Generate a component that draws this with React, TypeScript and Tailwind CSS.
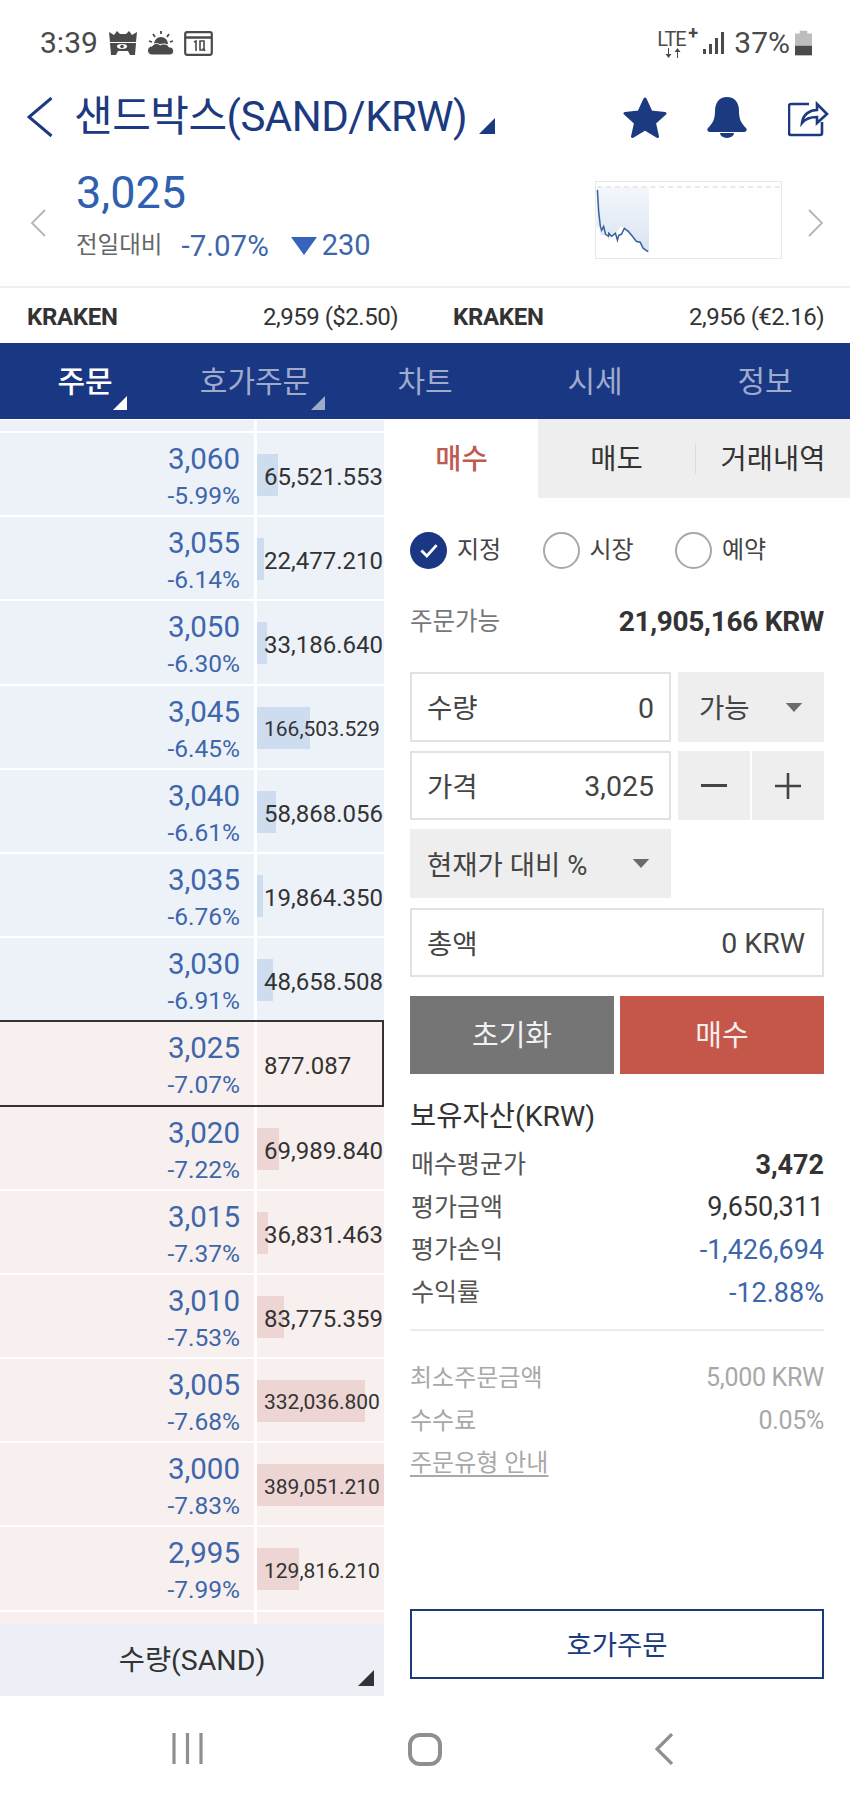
const ASKS = [
  { price: "3,060", pct: "-5.99%", vol: "65,521.553", bar: 21 },
  { price: "3,055", pct: "-6.14%", vol: "22,477.210", bar: 7 },
  { price: "3,050", pct: "-6.30%", vol: "33,186.640", bar: 10 },
  { price: "3,045", pct: "-6.45%", vol: "166,503.529", bar: 53, small: true },
  { price: "3,040", pct: "-6.61%", vol: "58,868.056", bar: 19 },
  { price: "3,035", pct: "-6.76%", vol: "19,864.350", bar: 6 },
  { price: "3,030", pct: "-6.91%", vol: "48,658.508", bar: 16 },
];

const BIDS = [
  { price: "3,025", pct: "-7.07%", vol: "877.087", bar: 0, current: true },
  { price: "3,020", pct: "-7.22%", vol: "69,989.840", bar: 22 },
  { price: "3,015", pct: "-7.37%", vol: "36,831.463", bar: 11 },
  { price: "3,010", pct: "-7.53%", vol: "83,775.359", bar: 27 },
  { price: "3,005", pct: "-7.68%", vol: "332,036.800", bar: 108, small: true },
  { price: "3,000", pct: "-7.83%", vol: "389,051.210", bar: 127, small: true },
  { price: "2,995", pct: "-7.99%", vol: "129,816.210", bar: 42, small: true },
];

type Level = {
  price: string;
  pct: string;
  vol: string;
  bar: number;
  small?: boolean;
  current?: boolean;
};

function Corner({ className }: { className: string }) {
  return (
    <svg viewBox="0 0 16 16" className={className} fill="currentColor">
      <polygon points="16,0 16,16 0,16" />
    </svg>
  );
}

function Caret() {
  return (
    <svg viewBox="0 0 20 12" className="h-[11px] w-[20px] text-[#6b6b6b]" fill="currentColor">
      <path d="M1 1h18L10 11z" />
    </svg>
  );
}

function Row({ level, side }: { level: Level; side: "ask" | "bid" }) {
  const bg = side === "ask" ? "bg-[#edf2f9]" : "bg-[#f8f0ee]";
  const barBg = side === "ask" ? "bg-[#cedcef]" : "bg-[#ecd5d3]";
  return (
    <div className="relative mb-[2px] flex h-[82.2px] shrink-0">
      <div className={`flex w-[254px] flex-col items-end pr-[14px] pt-[8px] text-[#3d66ab] ${bg}`}>
        <span className="text-[29.5px] leading-[36px]">{level.price}</span>
        <span className="mt-px text-[24.5px] leading-[36px]">{level.pct}</span>
      </div>
      <div className={`relative ml-[3px] flex w-[127px] items-center pl-[7px] pt-[6px] text-[#333] ${bg}`}>
        {level.bar > 0 && (
          <div
            className={`absolute left-0 top-[21px] h-[42px] ${barBg}`}
            style={{ width: level.bar }}
          />
        )}
        <span className={`relative ${level.small ? "text-[21px]" : "text-[24px]"}`}>{level.vol}</span>
      </div>
      {level.current && (
        <div className="absolute inset-x-0 -inset-y-[2px] border-y-2 border-r-2 border-[#333]" />
      )}
    </div>
  );
}

function RadioItem({ label, checked }: { label: string; checked?: boolean }) {
  return (
    <div className="flex w-[132.5px] items-center gap-[10px]">
      {checked ? (
        <span className="flex h-[37px] w-[37px] items-center justify-center rounded-full bg-[#1a3784]">
          <svg viewBox="0 0 24 24" className="h-[26px] w-[26px]" fill="none" stroke="white" strokeWidth="2.6">
            <path d="M5 12.5l5 5 9-10" />
          </svg>
        </span>
      ) : (
        <span className="h-[37px] w-[37px] rounded-full border-2 border-[#a8a8a8]" />
      )}
      <span className="text-[24px] text-[#444]">{label}</span>
    </div>
  );
}

function InfoRow({ label, value, className }: { label: string; value: string; className: string }) {
  return (
    <div className="flex h-[42.7px] items-center justify-between pt-[3px]">
      <span className="pl-[1px] text-[25px] text-[#555]">{label}</span>
      <span className={className}>{value}</span>
    </div>
  );
}

function StatusBar() {
  return (
    <div className="flex h-[75px] items-start justify-between pl-[40px] pr-[38px] pt-[28px] text-[#4a4a4a]">
      <div className="flex items-center">
        <span className="text-[30px] leading-[30px]">3:39</span>
        <svg viewBox="0 0 28 24" className="ml-[11px] h-[24px] w-[28px]" fill="currentColor">
          <path d="M0 1l5 3 3-4 3 3h6l3-3 3 4 5-3-1 10H1z" />
          <path d="M1 12h26l-1 12h-5l-2-4H9l-2 4H2z" />
          <ellipse cx="13" cy="15.5" rx="5" ry="2.4" fill="white" />
          <circle cx="13" cy="15.5" r="1.8" />
        </svg>
        <svg viewBox="0 0 26 24" className="ml-[11px] h-[24px] w-[26px]" fill="currentColor">
          <path d="M13 0v3M5 3l2 3M21 3l-2 3M1 10l3 1M25 10l-3 1" stroke="currentColor" strokeWidth="1.8" />
          <path d="M6 13a7 7 0 0 1 14 0z" />
          <path d="M4 24a4.500 4.500 0 0 1 0-9c3-3.500 6-3 8-1 3-2 8-1 9 2a4 4 0 0 1 1 8z" stroke="white" strokeWidth="1" />
        </svg>
        <svg viewBox="0 0 29 25" className="ml-[10px] h-[25px] w-[29px]" fill="none" stroke="currentColor">
          <rect x="1.200" y="1.200" width="26.600" height="22.600" rx="2" strokeWidth="2.200" />
          <path d="M1 6.500h27" strokeWidth="2.500" />
          <path d="M10 11l2-1v10M16 10h4v9h-4zM19 17l2 3" strokeWidth="1.600" />
        </svg>
      </div>
      <div className="flex items-center">
        <div className="relative h-[28px] w-[42px] text-[#4a4a4a]">
          <span className="absolute left-0 top-0 text-[20px] leading-[20px] tracking-[-1px]">LTE</span>
          <span className="absolute left-[31px] top-[-5px] text-[18px] font-bold leading-[18px]">+</span>
          <svg viewBox="0 0 16 10" className="absolute left-[8px] top-[19px] h-[10px] w-[16px]" fill="currentColor">
            <path d="M4 0v6h2.500L3.500 10 .5 6H3V0zM12 10V4H9.500L12.500 0l3 4H13v6z" />
          </svg>
        </div>
        <svg viewBox="0 0 22 22" className="ml-[4px] h-[22px] w-[22px]" fill="currentColor">
          <rect x="0" y="17" width="3" height="5" />
          <rect x="6" y="12" width="3" height="10" />
          <rect x="12" y="6" width="3" height="16" />
          <rect x="18" y="0" width="3" height="22" />
        </svg>
        <span className="ml-[9px] text-[30px] leading-[30px]">37%</span>
        <svg viewBox="0 0 18 26" className="ml-[5px] h-[26px] w-[17px]">
          <path d="M5 0h8v3h5v23H0V3h5z" fill="#bdbdbd" />
          <rect x="0" y="16" width="18" height="10" fill="#4a4a4a" />
        </svg>
      </div>
    </div>
  );
}

function Header() {
  return (
    <div className="flex h-[84px] items-center text-[#1c3a80]">
      <svg viewBox="0 0 26 40" className="ml-[27px] h-[40px] w-[26px]" fill="none" stroke="currentColor" strokeWidth="3">
        <path d="M24.500 1L2 20l22.500 19" />
      </svg>
      <span className="ml-[21px] text-[42px] leading-none tracking-[-0.5px]">샌드박스(SAND/KRW)</span>
      <Corner className="ml-[12px] mt-[17px] h-[16px] w-[16px]" />
      <div className="ml-auto flex items-center">
        <svg viewBox="0 0 46 42" className="h-[42px] w-[46px]" fill="currentColor" stroke="currentColor" strokeWidth="3" strokeLinejoin="round">
          <path d="M23 3l6 13 14 1.500-10.500 9.500 3 13.500L23 33l-12.500 7.500 3-13.500L3 17.500 17 16z" />
        </svg>
        <svg viewBox="0 0 40 42" className="ml-[39px] h-[42px] w-[40px]" fill="currentColor">
          <path d="M20 1c8 0 12 6 12 14 0 8 2 12 7 17 1.500 2 .5 4-2 4H3c-2.500 0-3.500-2-2-4 5-5 7-9 7-17C8 7 12 1 20 1z" />
          <path d="M13 37h14a7 5 0 0 1-14 0z" />
        </svg>
        <svg viewBox="0 0 41 39" className="ml-[41px] mr-[21px] h-[39px] w-[41px]" fill="none" stroke="currentColor" strokeWidth="2.600">
          <path d="M21 6H3a2 2 0 0 0-2 2v27a2 2 0 0 0 2 2h29a2 2 0 0 0 2-2V24" />
          <path d="M14 25c1-9 8-13 15-13V6l10 10-10 9v-6c-6 0-11 1-15 6z" />
        </svg>
      </div>
    </div>
  );
}

function PriceBlock() {
  return (
    <div className="flex h-[129px] items-center border-b-2 border-[#eeeeee]">
      <svg viewBox="0 0 16 28" className="ml-[30px] h-[28px] w-[16px]" fill="none" stroke="#b5b5b5" strokeWidth="1.800">
        <path d="M15 1L2 14l13 13" />
      </svg>
      <div className="mb-[14px] ml-[30px] flex flex-col">
        <span className="text-[45px] leading-[52px] text-[#2f5fb0]">3,025</span>
        <div className="mt-[9px] flex h-[36px] items-center text-[#3d66ab]">
          <span className="text-[23.5px] text-[#666]">전일대비</span>
          <span className="ml-[19px] text-[29.5px]">-7.07%</span>
          <svg viewBox="0 0 26 18" className="ml-[22px] h-[18px] w-[26px] text-[#3464bd]" fill="currentColor">
            <path d="M0 0h26L13 18z" />
          </svg>
          <span className="ml-[5px] text-[29px]">230</span>
        </div>
      </div>
      <div className="relative mb-[5px] ml-auto h-[78px] w-[187px] border border-[#e8e8e8]">
        <svg viewBox="0 0 186 77" className="h-full w-full">
          <defs>
            <linearGradient id="spark" x1="0" y1="0" x2="0" y2="1">
              <stop offset="0" stopColor="#f4f7fb" />
              <stop offset="1" stopColor="#d8e3f1" />
            </linearGradient>
          </defs>
          <path d="M1 5H53V72L47 66 43 61 40 59 37 56 34 54 31 51 28 47 24 45 21 50 18 53 15 53 13 52 12 60 10 53 8 54 4 54 3 51 3 44 1 47 0 44V5z" fill="url(#spark)" />
          <path d="M0.500 5H186" stroke="#e4e4e4" strokeWidth="1.500" strokeDasharray="5 4" />
          <path
            d="M0.700 8L2 30 3.700 45 5 49 7 45 9 53 12 55 12.300 52 15 55 19 52 21 59 22.300 54 25 53 28 47 32 50 37 56 40 60 44 61 47 67 52 70.500"
            fill="none"
            stroke="#36609f"
            strokeWidth="1.500"
          />
        </svg>
      </div>
      <svg viewBox="0 0 16 28" className="ml-[26px] mr-[26px] h-[28px] w-[16px]" fill="none" stroke="#b5b5b5" strokeWidth="1.800">
        <path d="M1 1l13 13L1 27" />
      </svg>
    </div>
  );
}

function KrakenRow() {
  return (
    <div className="flex h-[55px] items-center pl-[27px] pr-[26px] pt-[3px] text-[24px] text-[#333]">
      <div className="flex w-[371px] justify-between">
        <span className="font-bold tracking-[-0.3px]">KRAKEN</span>
        <span className="tracking-[-0.5px]">2,959 ($2.50)</span>
      </div>
      <div className="ml-[55px] flex flex-1 justify-between">
        <span className="font-bold tracking-[-0.3px]">KRAKEN</span>
        <span className="tracking-[-0.5px]">2,956 (€2.16)</span>
      </div>
    </div>
  );
}

function NavTabs() {
  return (
    <div className="grid h-[76px] grid-cols-5 bg-[#1a3784] text-[30px] text-[#9fabcb]">
      <div className="relative flex items-center justify-center font-medium text-white">
        주문
        <Corner className="absolute left-[113px] top-[53px] h-[14px] w-[14px]" />
      </div>
      <div className="relative flex items-center justify-center">
        호가주문
        <Corner className="absolute left-[141px] top-[53px] h-[14px] w-[14px]" />
      </div>
      <div className="flex items-center justify-center">차트</div>
      <div className="flex items-center justify-center">시세</div>
      <div className="flex items-center justify-center">정보</div>
    </div>
  );
}

function OrderBook() {
  return (
    <div className="flex w-[384px] shrink-0 flex-col">
      <div className="flex-1 overflow-hidden">
        <div className="mb-[2px] mt-[1px] flex h-[11px]">
          <div className="w-[254px] bg-[#edf2f9]" />
          <div className="ml-[3px] w-[127px] bg-[#edf2f9]" />
        </div>
        {ASKS.map((level) => (
          <Row key={level.price} level={level} side="ask" />
        ))}
        {BIDS.map((level) => (
          <Row key={level.price} level={level} side="bid" />
        ))}
        <div className="flex h-[82px]">
          <div className="w-[254px] bg-[#f8f0ee]" />
          <div className="ml-[3px] w-[127px] bg-[#f8f0ee]" />
        </div>
      </div>
      <div className="relative flex h-[72px] shrink-0 items-center justify-center bg-[#eceff5] pt-[3px] text-[28.5px] text-[#333]">
        수량(SAND)
        <Corner className="absolute left-[358px] top-[46px] h-[16px] w-[16px]" />
      </div>
    </div>
  );
}

function OrderForm() {
  return (
    <div className="ml-px flex flex-1 flex-col">
      <div className="flex h-[79px] text-[28.5px]">
        <div className="flex w-[153px] items-center justify-center pt-[4px] font-medium text-[#bf5a50]">매수</div>
        <div className="flex flex-1 items-center bg-[#eeeeee] text-[#333]">
          <div className="flex w-[157px] items-center justify-center pt-[4px]">매도</div>
          <div className="h-[30px] w-px bg-[#dcdcdc]" />
          <div className="flex flex-1 items-center justify-center pt-[4px]">거래내역</div>
        </div>
      </div>
      <div className="flex flex-1 flex-col pl-[25px] pr-[26px]">
        <div className="mt-[34px] flex h-[36px] items-center">
          <RadioItem label="지정" checked />
          <RadioItem label="시장" />
          <RadioItem label="예약" />
        </div>
        <div className="mt-[36px] flex h-[36px] items-center justify-between">
          <span className="text-[24.5px] text-[#777]">주문가능</span>
          <span className="text-[28px] font-bold tracking-[-0.3px] text-[#333]">21,905,166 KRW</span>
        </div>
        <div className="mt-[32px] flex h-[70px] gap-[7px]">
          <div className="flex w-[261px] items-center justify-between border-2 border-[#e2e2e2] pl-[15px] pr-[15px] pt-[4px] text-[#444]">
            <span className="text-[27.5px]">수량</span>
            <span className="text-[28.5px]">0</span>
          </div>
          <div className="flex flex-1 items-center justify-between bg-[#eeeeee] pl-[21px] pr-[20px] text-[27.5px] text-[#444]">
            <span className="pt-[4px]">가능</span>
            <Caret />
          </div>
        </div>
        <div className="mt-[9px] flex h-[69px] gap-[7px]">
          <div className="flex w-[261px] items-center justify-between border-2 border-[#e2e2e2] pl-[15px] pr-[15px] pt-[4px] text-[#444]">
            <span className="text-[27.5px]">가격</span>
            <span className="text-[28.5px]">3,025</span>
          </div>
          <div className="flex flex-1 gap-[2px]">
            <div className="flex flex-1 items-center justify-center bg-[#eeeeee]">
              <div className="h-[3px] w-[26px] bg-[#444]" />
            </div>
            <div className="relative flex flex-1 items-center justify-center bg-[#eeeeee]">
              <svg viewBox="0 0 26 26" className="h-[26px] w-[26px]" fill="none" stroke="#444" strokeWidth="2.600">
                <path d="M13 0v26M0 13h26" />
              </svg>
            </div>
          </div>
        </div>
        <div className="mt-[9px] flex h-[69px] w-[261px] items-center justify-between bg-[#eeeeee] pl-[17px] pr-[20px] text-[27.5px] text-[#444]">
          <span className="pt-[4px]">현재가 대비 %</span>
          <Caret />
        </div>
        <div className="mt-[10px] flex h-[69px] items-center justify-between border-2 border-[#e2e2e2] pl-[15px] pr-[17px] pt-[4px] text-[#444]">
          <span className="text-[27.5px]">총액</span>
          <span className="text-[28.5px]">0 KRW</span>
        </div>
        <div className="mt-[19px] flex h-[78px] gap-[6px] text-[29px]">
          <div className="flex flex-1 items-center justify-center bg-[#757575] pt-[4px] text-[#f2f2f2]">초기화</div>
          <div className="flex flex-1 items-center justify-center bg-[#c4574a] pt-[4px] text-[#f8eeec]">매수</div>
        </div>
        <div className="mt-[24px] flex h-[38px] items-center text-[28.5px] text-[#333]">보유자산(KRW)</div>
        <div className="mt-[6px]">
          <InfoRow label="매수평균가" value="3,472" className="text-[27px] font-bold text-[#333]" />
          <InfoRow label="평가금액" value="9,650,311" className="text-[27px] text-[#333]" />
          <InfoRow label="평가손익" value="-1,426,694" className="text-[27px] text-[#3d66ab]" />
          <InfoRow label="수익률" value="-12.88%" className="text-[27px] text-[#3d66ab]" />
        </div>
        <div className="mt-[16px] h-[2px] bg-[#ececec]" />
        <div className="mt-[26px] text-[24px] text-[#a8a8a8]">
          <div className="flex h-[42.7px] items-center justify-between">
            <span>최소주문금액</span>
            <span className="text-[25px] tracking-[-0.3px]">5,000 KRW</span>
          </div>
          <div className="flex h-[42.7px] items-center justify-between">
            <span>수수료</span>
            <span className="text-[25px] tracking-[-0.3px]">0.05%</span>
          </div>
          <div className="flex h-[42.7px] items-center">
            <span className="underline underline-offset-4">주문유형 안내</span>
          </div>
        </div>
        <div className="mb-[17px] mt-auto flex h-[70px] items-center justify-center border-2 border-[#1a3a78] pt-[4px] text-[27.5px] text-[#1c3a80]">
          호가주문
        </div>
      </div>
    </div>
  );
}

function SystemNav() {
  return (
    <div className="flex h-[99px] items-start pt-[37px]">
      <svg viewBox="0 0 31 31" className="ml-[172px] h-[31px] w-[31px]" fill="none" stroke="#8f8f8f" strokeWidth="3.200">
        <path d="M2 0v31M15.500 0v31M29 0v31" />
      </svg>
      <div className="ml-[205px] h-[33px] w-[34px] rounded-[12px] border-[4px] border-[#8f8f8f]" />
      <svg viewBox="0 0 19 32" className="ml-[213px] h-[32px] w-[19px]" fill="none" stroke="#8f8f8f" strokeWidth="3.200">
        <path d="M17 1L2 16l15 15" />
      </svg>
    </div>
  );
}

export default function App() {
  return (
    <div className="flex h-[1795px] w-[850px] flex-col overflow-hidden bg-white font-['Roboto','Noto_Sans_CJK_KR',sans-serif]">
      <StatusBar />
      <Header />
      <PriceBlock />
      <KrakenRow />
      <NavTabs />
      <div className="flex h-[1277px]">
        <OrderBook />
        <OrderForm />
      </div>
      <SystemNav />
    </div>
  );
}
